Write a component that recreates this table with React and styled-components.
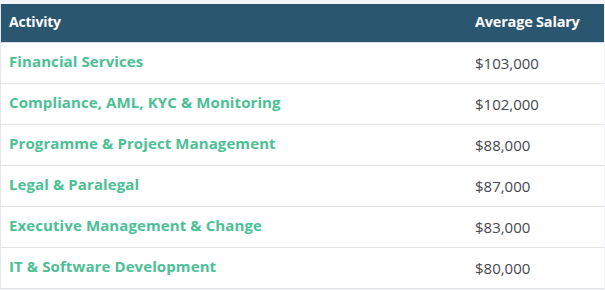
import React from "react";
import styled, { createGlobalStyle } from "styled-components";

const Global = createGlobalStyle`
  html, body { margin: 0; padding: 0; background: #f3f5f8; }
  body { font-family: "Open Sans", Lato, sans-serif; }
`;

const Wrap = styled.div`
  padding-top: 4px;
  width: 605px;
  height: 290px;
  box-sizing: border-box;
  overflow: hidden;
`;

const Table = styled.table`
  width: 604px;
  border-collapse: collapse;
  background: #fff;
  border-left: 1px solid #e4e6ea;
`;

const HeadRow = styled.tr`
  background: #2b566f;
  height: 38px;
  border-bottom: 1px solid #d9dbef;
`;

const Th = styled.th`
  color: #fff;
  font-weight: 700;
  font-size: ${(p) => (p.$right ? "14.5px" : "14px")};
  letter-spacing: -0.2px;
  text-align: left;
  padding: 0 0 2px ${(p) => (p.$right ? "9px" : "8px")};
  width: ${(p) => p.$w || "auto"};
`;

const Row = styled.tr`
  height: 41px;
  border-bottom: 1px solid #e2e2e2;
`;

const Activity = styled.td`
  color: #4cc095;
  font-weight: 700;
  font-size: 15px;
  letter-spacing: 0.1px;
  padding: 0 0 3px 8px;
`;

const Salary = styled.td`
  color: #45484d;
  font-size: 15px;
  padding: 0 0 0 9px;
`;

const data = [
  ["Financial Services", "$103,000"],
  ["Compliance, AML, KYC & Monitoring", "$102,000"],
  ["Programme & Project Management", "$88,000"],
  ["Legal & Paralegal", "$87,000"],
  ["Executive Management & Change", "$83,000"],
  ["IT & Software Development", "$80,000"],
];

export default function App() {
  return (
    <Wrap>
      <Global />
      <Table>
        <thead>
          <HeadRow>
            <Th>Activity</Th>
            <Th $right $w="129px">Average Salary</Th>
          </HeadRow>
        </thead>
        <tbody>
          {data.map(([a, s]) => (
            <Row key={a}>
              <Activity>{a}</Activity>
              <Salary>{s}</Salary>
            </Row>
          ))}
        </tbody>
      </Table>
    </Wrap>
  );
}
